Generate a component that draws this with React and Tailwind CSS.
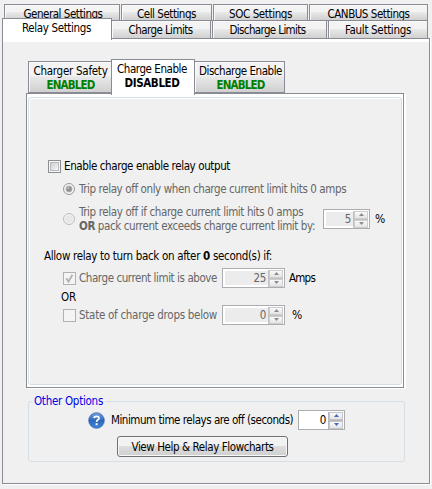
import React, { useLayoutEffect, useRef } from "react";

// Text label whose tracking is adjusted so that it fills exactly `w` pixels.
function Label({ w, className = "", children }) {
  const ref = useRef(null);
  useLayoutEffect(() => {
    const el = ref.current;
    el.style.letterSpacing = "0px";
    const natural = el.getBoundingClientRect().width;
    el.style.letterSpacing = (w - natural) / el.textContent.length + "px";
  }, [w]);
  return (
    <span ref={ref} className={"inline-block shrink-0 whitespace-pre " + className}>
      {children}
    </span>
  );
}

const idle = "border border-[#898c95] bg-linear-to-b from-[#f3f3f3] from-45% via-[#e8e8e8] via-50% to-[#d0d0d0] shadow-[inset_1px_1px_0_#fafafa]";

function Tab({ className = "", text, w }) {
  return (
    <div className={"flex justify-center pt-0.5 " + idle + " " + className}>
      <Label w={w}>{text}</Label>
    </div>
  );
}

function Arrows({ on }) {
  const fill = on ? "#4a66b8" : "#8b8b8b";
  const box = "flex h-2 w-full items-center justify-center border bg-linear-to-b from-[#fafafa] to-[#e4e4e4] " + (on ? "border-[#c3c4ca]" : "border-[#cdcdcd]");
  return (
    <div className={"flex h-[17px] w-[15px] flex-col justify-between border-l " + (on ? "border-[#b5b6bd] bg-[#b5b6bd]" : "border-[#c2c2c2] bg-[#c2c2c2]")}>
      <div className={box}>
        <svg width="5" height="3" viewBox="0 0 5 3"><path d="M0 3L2.5 0L5 3Z" fill={fill} /></svg>
      </div>
      <div className={box}>
        <svg width="5" height="3" viewBox="0 0 5 3"><path d="M0 0L2.5 3L5 0Z" fill={fill} /></svg>
      </div>
    </div>
  );
}

function Spinner({ value, on, className }) {
  return (
    <div className={"flex h-5 shrink-0 items-center border border-[#abadb3] bg-white pr-px pl-0.5 " + className}>
      <div className={"flex h-3.5 flex-1 items-center justify-end pr-0.5 tracking-tight " + (on ? "bg-white text-black" : "bg-[#ececec] text-[#666]")}>
        {value}
      </div>
      <Arrows on={on} />
    </div>
  );
}

function Check({ checked, on }) {
  return (
    <div className={"flex size-[13px] shrink-0 items-center justify-center border " + (on ? "border-[#8e8f8f] bg-[#f4f4f4]" : "border-[#b1b1b1] bg-[#f4f4f4]")}>
      {on && <div className="size-[9px] border border-[#b9bcc2] bg-linear-to-br from-[#cbcfd5] to-[#f6f6f6]" />}
      {checked && (
        <svg width="9" height="9" viewBox="0 0 9 9"><path d="M1.2 4.2L3.5 7.6L7.4 .8" fill="none" stroke="#b2b2b8" strokeWidth="1.9" /></svg>
      )}
    </div>
  );
}

function Radio({ checked }) {
  return (
    <svg className="shrink-0" width="12" height="12" viewBox="0 0 12 12">
      <circle cx="6" cy="6" r="5.5" fill="#f2f2f2" stroke={checked ? "#999" : "#bdbdbd"} />
      {checked ? (
        <>
          <circle cx="6" cy="6" r="3" fill="#8f8f8f" stroke="#b0b0b0" strokeWidth=".8" />
          <circle cx="5.4" cy="5.2" r="1.1" fill="#bcbcbc" />
        </>
      ) : (
        <circle cx="6" cy="6" r="3.8" fill="#e7e7e7" />
      )}
    </svg>
  );
}

export default function App() {
  return (
    <div className="flex h-[489px] w-[432px] flex-col overflow-hidden bg-[#f0f0f0] pt-1 font-['DejaVu_Sans_Condensed','DejaVu_Sans',sans-serif] text-[11.5px] leading-[14px] text-black">
      {/* Back row of tabs */}
      <div className="ml-1 flex h-[17px] w-[424px] shrink-0 gap-px">
        <Tab className="w-[116px] pl-0.5" w={79} text="General Settings" />
        <Tab className="w-[91px]" w={59} text="Cell Settings" />
        <Tab className="w-[95px]" w={63} text="SOC Settings" />
        <Tab className="flex-1" w={82} text="CANBUS Settings" />
      </div>
      {/* Front row of tabs */}
      <div className="relative z-10 -mt-[3px] ml-0.5 flex h-[21px] shrink-0 items-start">
        <div className="flex h-[22px] w-[110px] justify-center border border-b-0 border-[#898c95] bg-white pt-0.5 pr-px">
          <Label w={69}>Relay Settings</Label>
        </div>
        <Tab className="mt-0.5 h-[19px] w-[99px] border-l-0 pr-px" w={64} text="Charge Limits" />
        <Tab className="mt-0.5 ml-px h-[19px] w-[115px] pr-1" w={76} text="Discharge Limits" />
        <Tab className="mt-0.5 ml-px h-[19px] w-[100px]" w={66} text="Fault Settings" />
      </div>

      {/* Main panel */}
      <div className="-mt-px ml-0.5 flex h-[446px] w-[428px] shrink-0 flex-col border border-[#898c95] shadow-[1px_1px_0_#fff]">
        <div className="h-[3px] shrink-0 bg-white" />
        <div className="mt-[17px] ml-[25px] flex h-[35px] shrink-0 items-start">
          <div className={"mt-0.5 flex h-8 w-[83px] flex-col items-center border-r-0 pt-0.5 pl-px " + idle}>
            <Label w={74}>Charger Safety</Label>
            <Label w={48} className="font-bold text-[#008000]">ENABLED</Label>
          </div>
          <div className="relative z-10 flex h-[36px] w-[84px] flex-col items-center border border-b-0 border-[#898c95] bg-white pt-0.5 pr-0.5">
            <Label w={70}>Charge Enable</Label>
            <Label w={55} className="font-bold">DISABLED</Label>
          </div>
          <div className={"mt-0.5 flex h-8 w-[90px] flex-col items-center border-l-0 pt-0.5 pl-0.5 " + idle}>
            <Label w={83}>Discharge Enable</Label>
            <Label w={48} className="font-bold text-[#008000]">ENABLED</Label>
          </div>
        </div>

        {/* Relay page */}
        <div className="-mt-px ml-[23px] h-[295px] w-[378px] shrink-0 border border-[#898c95] bg-white px-px pt-[3px] pb-0.5 shadow-[2px_1px_0_#fff]">
          <div className="flex h-full flex-col rounded-[3px] border border-[#d5dfe5] bg-[#f0f0f0] shadow-[inset_1px_1px_0_#fff]">
            <div className="mt-[60px] ml-[19px] flex h-4 items-center gap-[3px]">
              <Check on />
              <Label w={166}>Enable charge enable relay output</Label>
            </div>
            <div className="mt-[7px] ml-[34px] flex h-4 items-center gap-1 text-[#666]">
              <Radio checked />
              <Label w={267}>Trip relay off only when charge current limit hits 0 amps</Label>
            </div>
            <div className="mt-2 ml-[34px] flex h-7 items-center gap-1 text-[#666]">
              <Radio />
              <div className="flex w-[240px] flex-col">
                <Label w={224} className="self-start">Trip relay off if charge current limit hits 0 amps</Label>
                <Label w={236} className="self-start"><b>OR</b> pack current exceeds charge current limit by:</Label>
              </div>
              <Spinner value="5" className="w-[47px]" />
              <Label w={11} className="ml-px text-[12px] text-black">%</Label>
            </div>
            <div className="mt-[15px] ml-[15px] flex h-4 items-center">
              <Label w={228}>Allow relay to turn back on after <b>0</b> second(s) if:</Label>
            </div>
            <div className="mt-1 ml-[34px] flex h-5 items-center gap-[3px] text-[#666]">
              <Check checked />
              <Label w={138}>Charge current limit is above</Label>
              <Spinner value="25" className="ml-0.5 w-[63px]" />
              <Label w={26} className="ml-px text-black">Amps</Label>
            </div>
            <div className="mt-0.5 ml-8 flex h-3.5 items-center">
              <Label w={15}>OR</Label>
            </div>
            <div className="mt-px ml-[34px] flex h-5 items-center gap-[3px] text-[#666]">
              <Check />
              <Label w={138}>State of charge drops below</Label>
              <Spinner value="0" className="ml-0.5 w-[63px]" />
              <Label w={11} className="ml-1 text-[12px] text-black">%</Label>
            </div>
          </div>
        </div>

        {/* Other options */}
        <fieldset className="mt-[6px] ml-[25px] h-[68px] w-[377px] shrink-0 rounded-[3px] border border-[#d5dfe5]">
          <legend className="ml-[3px] h-3.5 px-0.5 text-[#0000e6]">
            <Label w={69}>Other Options</Label>
          </legend>
          <div className="mt-[2px] ml-[59px] flex h-5 items-center">
            <svg className="shrink-0" width="17" height="17" viewBox="0 0 17 17">
              <defs>
                <linearGradient id="help" x1="0" y1="0" x2="0" y2="1">
                  <stop offset="0" stopColor="#78a5e0" />
                  <stop offset=".5" stopColor="#2f67bd" />
                  <stop offset="1" stopColor="#3f86dc" />
                </linearGradient>
              </defs>
              <circle cx="8.5" cy="8.5" r="7.8" fill="url(#help)" stroke="#2d5da6" strokeWidth=".7" />
              <path d="M6 6.2Q6.2 4.3 8.5 4.3Q11 4.3 11 6.2Q11 7.4 9.6 8.1Q8.6 8.7 8.6 10" fill="none" stroke="#fff" strokeWidth="1.7" />
              <rect x="7.6" y="11.2" width="2" height="2" fill="#fff" />
            </svg>
            <Label w={182} className="ml-[6px]">Minimum time relays are off (seconds)</Label>
            <Spinner on value="0" className="ml-[5px] w-[47px]" />
          </div>
          <button className="mt-[6px] ml-[88px] flex h-[21px] w-[171px] items-center justify-center rounded-[3px] border border-[#707070] bg-linear-to-b from-[#f2f2f2] from-45% via-[#dddddd] via-50% to-[#cfcfcf] shadow-[inset_0_0_0_1px_#f8f8f8]">
            <Label w={142}>View Help &amp; Relay Flowcharts</Label>
          </button>
        </fieldset>
      </div>
    </div>
  );
}
